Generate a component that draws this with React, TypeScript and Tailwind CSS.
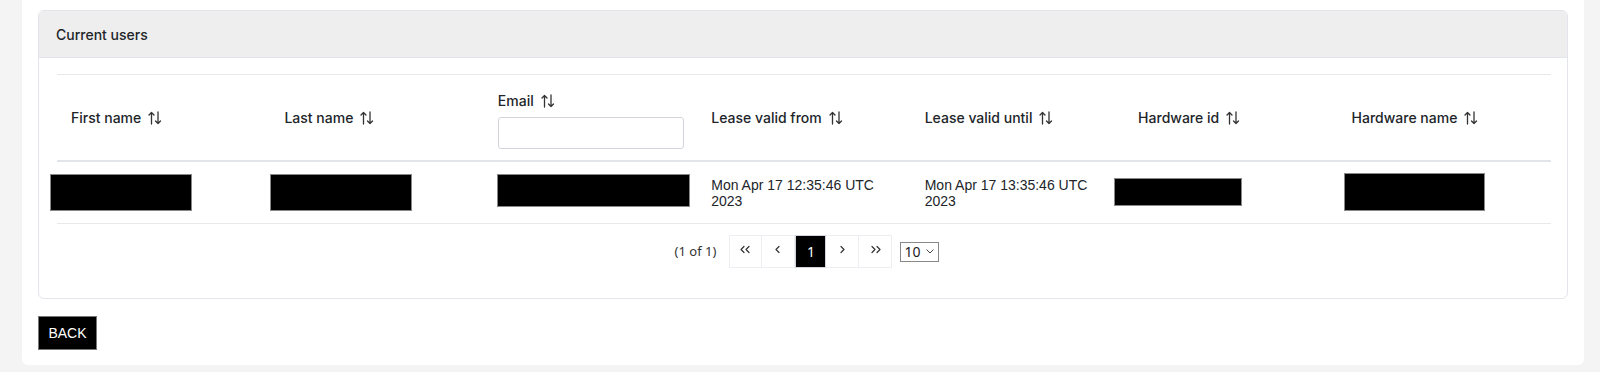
import React from 'react';

function SortIcon() {
  return (
    <svg width="14" height="14" viewBox="0 0 14 14" fill="none" stroke="#333" strokeWidth="1.3" strokeLinecap="round" strokeLinejoin="round" className="inline-block ml-[7px] -mt-[2px]">
      <path d="M3.5 13V1.5M1 4L3.5 1.5L6 4" />
      <path d="M10 1V12.5M7.5 10L10 12.5L12.5 10" />
    </svg>
  );
}

function Chevron({ dir, double }: { dir: 'left' | 'right'; double?: boolean }) {
  const one = dir === 'left' ? 'M5 1.5L2 4.5L5 7.5' : 'M3 1.5L6 4.5L3 7.5';
  const two = dir === 'left' ? 'M10 1.5L7 4.5L10 7.5' : 'M8 1.5L11 4.5L8 7.5';
  return (
    <svg width={double ? 13 : 8} height="9" viewBox={double ? '0 0 13 9' : '0 0 8 9'} fill="none" stroke="#333" strokeWidth="1.2" strokeLinecap="round" strokeLinejoin="round" className="-mt-[5px]">
      <path d={one} />
      {double && <path d={two} />}
    </svg>
  );
}

const columns = ['First name', 'Last name', 'Email', 'Lease valid from', 'Lease valid until', 'Hardware id', 'Hardware name'];

function Redacted({ w, h, ml }: { w: number; h: number; ml: number }) {
  return <div className="bg-black border border-[#888]" style={{ width: w, height: h, marginLeft: ml }} />;
}

export default function App() {
  return (
    <div className="min-h-[372px] bg-[#f4f4f4] pb-[8px] font-['Inter',sans-serif] text-[#212529]">
      <div className="ml-[22px] mr-[16px] bg-white rounded-b-md px-4 pt-[10px] pb-[15px]">
        {/* Card */}
        <div className="border border-[#e2e5e9] rounded-md overflow-hidden">
          <div className="h-[47px] bg-[#eeeeee] border-b border-[#e2e5e9] flex items-center px-[17px] text-[14px] font-medium">
            Current users
          </div>
          <div className="pt-[16px] pb-[30px] pl-[18px] pr-[16px]">
            <table className="w-full table-fixed border-collapse">
              <thead>
                <tr className="border-t border-[#e7e9ec] border-b-2 border-b-[#e2e5e9]">
                  {columns.map((c) => (
                    <th key={c} className="h-[86px] px-[14px] text-left align-middle text-[14px] font-medium whitespace-nowrap">
                      {c === 'Email' ? (
                        <div className="flex flex-col">
                          <span className="mt-[4px]">
                            {c}
                            <SortIcon />
                          </span>
                          <input className="mt-[6px] w-[186px] h-[32px] border border-[#d1d5db] rounded-[3px] bg-white" />
                        </div>
                      ) : (
                        <span>
                          {c}
                          <SortIcon />
                        </span>
                      )}
                    </th>
                  ))}
                </tr>
              </thead>
              <tbody>
                <tr className="border-b border-[#e7e9ec] h-[63px]">
                  <td className="px-[14px] align-middle">
                    <Redacted w={142} h={37} ml={-21} />
                  </td>
                  <td className="px-[14px] align-middle">
                    <Redacted w={142} h={37} ml={-14} />
                  </td>
                  <td className="px-[14px] align-middle">
                    <div className="-mt-[4px]">
                      <Redacted w={193} h={33} ml={-1} />
                    </div>
                  </td>
                  <td className="px-[14px] align-middle font-['Liberation_Sans',Arial,sans-serif] text-[14px] leading-[16px] pt-[1px]">
                    Mon Apr 17 12:35:46 UTC
                    <br />
                    2023
                  </td>
                  <td className="px-[14px] align-middle font-['Liberation_Sans',Arial,sans-serif] text-[14px] leading-[16px] pt-[1px]">
                    Mon Apr 17 13:35:46 UTC
                    <br />
                    2023
                  </td>
                  <td className="px-[14px] align-middle">
                    <Redacted w={128} h={28} ml={-24} />
                  </td>
                  <td className="px-[14px] align-middle">
                    <Redacted w={141} h={38} ml={-8} />
                  </td>
                </tr>
              </tbody>
            </table>
            {/* Paginator */}
            <div className="flex items-center justify-center pt-[11px] pl-[6px] font-['Noto_Sans',sans-serif] text-[13px] text-[#333]">
              <span className="mr-[13px]">(1 of 1)</span>
              <div className="flex">
                <button className="w-[33px] h-[33px] border border-[#eceef1] flex items-center justify-center"><Chevron dir="left" double /></button>
                <button className="w-[33px] h-[33px] border border-l-0 border-[#eceef1] flex items-center justify-center"><Chevron dir="left" /></button>
                <button className="w-[31px] h-[33px] bg-black text-white border border-[#d1d5db] flex items-center justify-center text-[14px]">1</button>
                <button className="w-[33px] h-[33px] border border-l-0 border-[#eceef1] flex items-center justify-center"><Chevron dir="right" /></button>
                <button className="w-[33px] h-[33px] border border-l-0 border-[#eceef1] flex items-center justify-center"><Chevron dir="right" double /></button>
              </div>
              <div className="ml-[8px] w-[39px] h-[20px] border border-[#888] flex items-center justify-between pl-[3px] pr-[4px] text-[14px] text-[#222]">
                <span className="leading-none">10</span>
                <svg width="8" height="5" viewBox="0 0 8 5" fill="none" stroke="#444" strokeWidth="1" strokeLinecap="round" strokeLinejoin="round">
                  <path d="M0.8 0.8L4 4L7.2 0.8" />
                </svg>
              </div>
            </div>
          </div>
        </div>
        {/* Back */}
        <button className="mt-[17px] h-[34px] w-[59px] bg-black text-white border border-[#777] font-['Liberation_Sans',Arial,sans-serif] text-[14px]">
          BACK
        </button>
      </div>
    </div>
  );
}
